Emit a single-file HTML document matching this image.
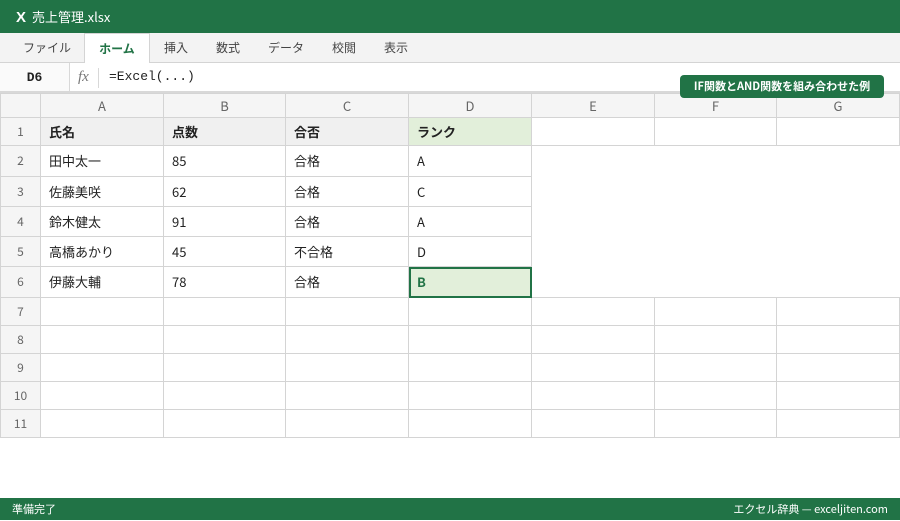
<!DOCTYPE html>
<html><head><meta charset="utf-8"><style>
*{margin:0;padding:0;box-sizing:border-box}
body{width:900px;height:520px;overflow:hidden;background:#fff;font-family:"Noto Sans CJK JP","Liberation Sans",sans-serif;position:relative;color:#222}
.title{position:absolute;left:0;top:0;width:900px;height:33px;background:#217346;color:#fff;font-size:13px;line-height:33px;padding-left:16px}
.title b{font-size:15px;margin-right:6px;font-family:"Liberation Sans",sans-serif}
.tabs{position:absolute;top:33px;left:0;width:900px;height:30px;background:#f3f3f3;border-bottom:1px solid #d4d4d4}
.tab{position:absolute;top:0;height:30px;line-height:30px;font-size:12px;color:#444}
.tab.on{background:#fff;border:1px solid #d4d4d4;border-bottom:none;height:31px;color:#217346;font-weight:bold;text-align:center}
.fbar{position:absolute;top:63px;left:0;width:900px;height:30px;border-bottom:2px solid #d8d8d8;background:#fff}
.nb{position:absolute;left:0;top:0;width:70px;height:28px;font:bold 13px "Liberation Mono",monospace;line-height:30px;text-align:center;background:#fafafa;border-right:1px solid #d8d8d8}
.fx{position:absolute;left:78px;top:6px;font:italic 15px "Liberation Serif",serif;color:#777}
.sep{position:absolute;left:98px;top:5px;height:20px;border-left:1px solid #d8d8d8}
.ft{position:absolute;left:109px;top:6px;font:13px "Liberation Mono",monospace}
.badge{position:absolute;left:680px;top:75px;width:204px;height:23px;background:#217346;color:#fff;border-radius:4px;font-size:11px;font-weight:bold;line-height:23px;text-align:center;z-index:3}
table{position:absolute;left:0;top:93px;border-collapse:collapse;table-layout:fixed}
td{border:1px solid #d4d4d4;font-size:13px;padding-left:8px;white-space:nowrap;line-height:16px}
tr.h td{background:#f5f5f5;color:#666;text-align:center;padding:0;height:24px;font-size:13px}
td.r{background:#f5f5f5;color:#666;text-align:center;padding:0;font-size:12px}
tr.hd td{background:#f0f0f0;font-weight:bold}
tr.hd td.r{font-weight:normal;background:#f5f5f5}
tr.hd td.g{background:#e2efda}
td.e{border:none}
td.sel{background:#e2efda;outline:2px solid #217346;outline-offset:-2px;color:#217346;font-weight:bold}
.status{position:absolute;left:0;top:498px;width:900px;height:22px;background:#217346;color:#fff;font-size:11px;line-height:23px}
</style></head><body>
<div class="title"><b>X</b>売上管理.xlsx</div>
<div class="tabs">
<div class="tab" style="left:23px">ファイル</div>
<div class="tab on" style="left:84px;width:66px">ホーム</div>
<div class="tab" style="left:164px">挿入</div>
<div class="tab" style="left:216px">数式</div>
<div class="tab" style="left:268px">データ</div>
<div class="tab" style="left:332px">校閲</div>
<div class="tab" style="left:384px">表示</div>
</div>
<div class="fbar"><div class="nb">D6</div><div class="fx">fx</div><div class="sep"></div><div class="ft">=Excel(...)</div></div>
<div class="badge">IF関数とAND関数を組み合わせた例</div>
<table>
<colgroup><col style="width:40px"><col style="width:123px"><col style="width:122px"><col style="width:123px"><col style="width:123px"><col style="width:123px"><col style="width:122px"><col style="width:123px"></colgroup>
<tr class="h"><td></td><td>A</td><td>B</td><td>C</td><td>D</td><td>E</td><td>F</td><td>G</td></tr>
<tr class="hd" style="height:28px"><td class="r">1</td><td>氏名</td><td>点数</td><td>合否</td><td class="g">ランク</td><td style="background:#fff"></td><td style="background:#fff"></td><td style="background:#fff"></td></tr>
<tr style="height:31px"><td class="r">2</td><td>田中太一</td><td>85</td><td>合格</td><td>A</td><td class="e" colspan="3" rowspan="5"></td></tr>
<tr style="height:30px"><td class="r">3</td><td>佐藤美咲</td><td>62</td><td>合格</td><td>C</td></tr>
<tr style="height:30px"><td class="r">4</td><td>鈴木健太</td><td>91</td><td>合格</td><td>A</td></tr>
<tr style="height:30px"><td class="r">5</td><td>高橋あかり</td><td>45</td><td>不合格</td><td>D</td></tr>
<tr style="height:31px"><td class="r">6</td><td>伊藤大輔</td><td>78</td><td>合格</td><td class="sel">B</td></tr>
<tr style="height:28px"><td class="r">7</td><td></td><td></td><td></td><td></td><td></td><td></td><td></td></tr>
<tr style="height:28px"><td class="r">8</td><td></td><td></td><td></td><td></td><td></td><td></td><td></td></tr>
<tr style="height:28px"><td class="r">9</td><td></td><td></td><td></td><td></td><td></td><td></td><td></td></tr>
<tr style="height:28px"><td class="r">10</td><td></td><td></td><td></td><td></td><td></td><td></td><td></td></tr>
<tr style="height:28px"><td class="r">11</td><td></td><td></td><td></td><td></td><td></td><td></td><td></td></tr>
</table>
<div class="status"><span style="position:absolute;left:12px">準備完了</span><span style="position:absolute;right:12px">エクセル辞典 — exceljiten.com</span></div>
</body></html>
